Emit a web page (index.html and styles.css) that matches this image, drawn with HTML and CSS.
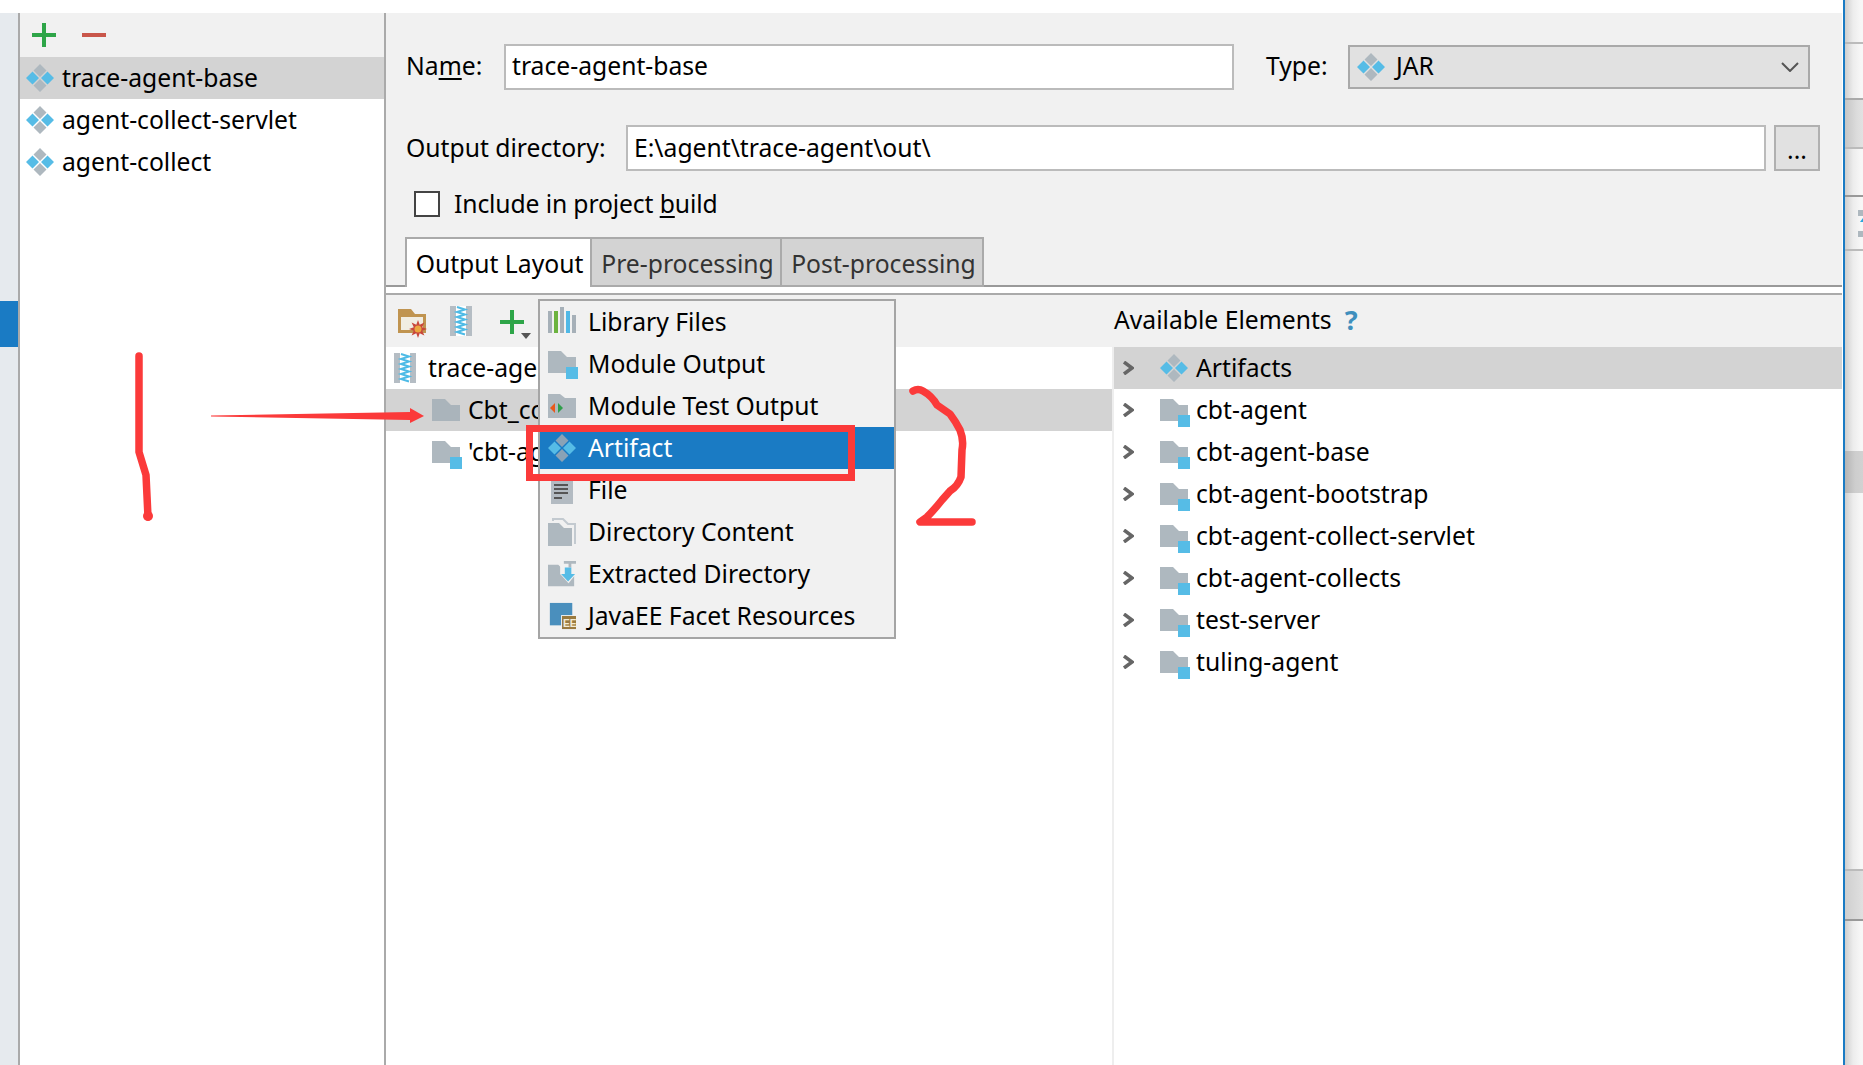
FILE: index.html
```html
<!DOCTYPE html>
<html lang="en">
<head>
<meta charset="utf-8">
<title>Project Structure - Artifacts</title>
<link rel="stylesheet" href="styles.css">
</head>
<body>
<svg class="defs" width="0" height="0" aria-hidden="true">
  <symbol id="i-artifact" viewBox="0 0 28 28">
    <path fill="#aeb8bf" d="M14 0l6.500 6.500L14 13 7.500 6.500zM14 15l6.500 6.500L14 28l-6.500-6.500z"/>
    <path fill="#56bce6" d="M6.500 7.500L13 14l-6.500 6.500L0 14zM21.500 7.500L28 14l-6.500 6.500L15 14z"/>
  </symbol>
  <symbol id="i-artifact-sel" viewBox="0 0 28 28">
    <path fill="#8aa2b6" d="M14 0l6.500 6.500L14 13 7.500 6.500zM14 15l6.500 6.500L14 28l-6.500-6.500z"/>
    <path fill="#56bce6" d="M6.500 7.500L13 14l-6.500 6.500L0 14zM21.500 7.500L28 14l-6.500 6.500L15 14z"/>
  </symbol>
  <symbol id="i-folder" viewBox="0 0 30 28">
    <path fill="#aab4bb" d="M0 0h13l6 6h9v16H0z"/>
  </symbol>
  <symbol id="i-module" viewBox="0 0 30 28">
    <path fill="#aeb8bf" d="M0 0h13l6 6h9v16H0z"/>
    <path fill="#56bce6" d="M18 16h12v12H18z"/>
  </symbol>
  <symbol id="i-zip" viewBox="0 0 22 30">
    <path fill="#b5bdc4" d="M0 0h22v30H0z"/>
    <path fill="#fff" d="M6 0h10v30H6z"/>
    <path fill="none" stroke="#4ebbe6" stroke-width="2" d="M7 1l8 2.500-8 2.500 8 2.500-8 2.500 8 2.500-8 2.500 8 2.500-8 2.500 8 2.500-8 2.500 8 2.500"/>
  </symbol>
</svg>

<div class="app">
  <div class="window">
    <div class="rail"><div class="rail-mark"></div></div>

    <aside class="list">
      <div class="list-bar">
        <svg class="ic24" viewBox="0 0 24 24"><path fill="#2ea548" d="M10 0h4v10h10v4H14v10h-4V14H0v-4h10z"/></svg>
        <svg class="ic24" viewBox="0 0 24 24"><path fill="#c9564a" d="M0 10h24v4H0z"/></svg>
      </div>
      <div class="row row-list is-sel"><svg class="ic28"><use href="#i-artifact"/></svg><span>trace-agent-base</span></div>
      <div class="row row-list"><svg class="ic28"><use href="#i-artifact"/></svg><span>agent-collect-servlet</span></div>
      <div class="row row-list"><svg class="ic28"><use href="#i-artifact"/></svg><span>agent-collect</span></div>
    </aside>

    <main class="main">
      <section class="form">
        <div class="form-row form-row-name">
          <label class="lbl lbl-name">Na<u>m</u>e:</label>
          <div class="input input-name">trace-agent-base</div>
          <label class="lbl lbl-type">Type:</label>
          <div class="select">
            <svg class="ic28"><use href="#i-artifact"/></svg>
            <span class="select-val">JAR</span>
            <svg class="select-arrow" viewBox="0 0 18 10"><path fill="none" stroke="#555" stroke-width="2" d="M1 1l8 8 8-8"/></svg>
          </div>
        </div>
        <div class="form-row form-row-out">
          <label class="lbl lbl-out">Output directory:</label>
          <div class="input input-out">E:\agent\trace-agent\out\</div>
          <div class="btn-dots">...</div>
        </div>
        <div class="form-row form-row-check">
          <span class="check"></span>
          <span class="check-label">Include in project <u>b</u>uild</span>
        </div>
      </section>

      <nav class="tabs">
        <div class="tab tab-on tab-a">Output Layout</div>
        <div class="tab tab-b">Pre-processing</div>
        <div class="tab tab-c">Post-processing</div>
      </nav>
      <div class="tabs-gap"></div>

      <section class="split">
        <div class="col col-left">
          <div class="head">
            <svg class="ic-star" viewBox="0 0 30 30">
              <path fill="#c09450" d="M0 0h13l4 5h11v19H0z"/>
              <path fill="#f1ede2" d="M3 8h22v13H3z"/>
              <path fill="#c9473a" d="M29 20L24.200 21.700 26.400 26.400 21.700 24.200 20 29 18.300 24.200 13.600 26.400 15.800 21.700 11 20 15.800 18.300 13.600 13.600 18.300 15.800 20 11 21.700 15.800 26.400 13.600 24.200 18.300z"/>
              <circle cx="20" cy="20" r="3.500" fill="#eba63f"/>
            </svg>
            <svg class="ic-zip"><use href="#i-zip"/></svg>
            <div class="add">
              <svg class="ic24" viewBox="0 0 24 24"><path fill="#2ea548" d="M10 0h4v10h10v4H14v10h-4V14H0v-4h10z"/></svg>
              <span class="add-caret"></span>
            </div>
          </div>
          <div class="tree tree-left">
            <div class="row row-root"><svg class="ic-zip"><use href="#i-zip"/></svg><span class="cut cut-root">trace-age</span></div>
            <div class="row row-child is-sel"><svg class="ic-folder"><use href="#i-folder"/></svg><span class="cut cut-child">Cbt_co</span></div>
            <div class="row row-child"><svg class="ic-folder"><use href="#i-module"/></svg><span class="cut cut-child">'cbt-ag</span></div>
          </div>
        </div>
        <div class="col col-right">
          <div class="head head-right"><span>Available Elements</span><span class="help">?</span></div>
          <div class="tree">
            <div class="row row-el is-sel"><svg class="chev" viewBox="0 0 12 14"><path d="M2 1l8 6-8 6"/></svg><svg class="ic28 ic-el"><use href="#i-artifact"/></svg><span>Artifacts</span></div>
            <div class="row row-el"><svg class="chev" viewBox="0 0 12 14"><path d="M2 1l8 6-8 6"/></svg><svg class="ic-folder ic-el"><use href="#i-module"/></svg><span>cbt-agent</span></div>
            <div class="row row-el"><svg class="chev" viewBox="0 0 12 14"><path d="M2 1l8 6-8 6"/></svg><svg class="ic-folder ic-el"><use href="#i-module"/></svg><span>cbt-agent-base</span></div>
            <div class="row row-el"><svg class="chev" viewBox="0 0 12 14"><path d="M2 1l8 6-8 6"/></svg><svg class="ic-folder ic-el"><use href="#i-module"/></svg><span>cbt-agent-bootstrap</span></div>
            <div class="row row-el"><svg class="chev" viewBox="0 0 12 14"><path d="M2 1l8 6-8 6"/></svg><svg class="ic-folder ic-el"><use href="#i-module"/></svg><span>cbt-agent-collect-servlet</span></div>
            <div class="row row-el"><svg class="chev" viewBox="0 0 12 14"><path d="M2 1l8 6-8 6"/></svg><svg class="ic-folder ic-el"><use href="#i-module"/></svg><span>cbt-agent-collects</span></div>
            <div class="row row-el"><svg class="chev" viewBox="0 0 12 14"><path d="M2 1l8 6-8 6"/></svg><svg class="ic-folder ic-el"><use href="#i-module"/></svg><span>test-server</span></div>
            <div class="row row-el"><svg class="chev" viewBox="0 0 12 14"><path d="M2 1l8 6-8 6"/></svg><svg class="ic-folder ic-el"><use href="#i-module"/></svg><span>tuling-agent</span></div>
          </div>
        </div>
      </section>
    </main>
  </div>

  <div class="strip">
    <div class="seg seg-a"></div>
    <div class="seg seg-b"></div>
    <div class="seg seg-c"></div>
    <div class="seg seg-d"></div>
    <div class="seg seg-e">
      <svg class="strip-ic" viewBox="0 0 5 28"><path fill="#aeb8bf" d="M0 0h5v6H0zM0 21h5v6H0z"/><path fill="#2aa4dc" d="M2 12l3-4v4z"/></svg>
    </div>
    <div class="seg seg-f"></div>
    <div class="seg seg-g"></div>
    <div class="seg seg-h"></div>
    <div class="seg seg-i"></div>
    <div class="seg seg-j"></div>
  </div>
</div>

<div class="menu">
  <div class="row menu-row"><svg class="mi mi-lib" viewBox="0 0 28 26"><path fill="#a6b0b8" d="M0 4h4v22H0zM12 0h4v26h-4zM24 8h4v18h-4z"/><path fill="#6cb33f" d="M6 4h4v22H6z"/><path fill="#4fb8e6" d="M18 4h4v22h-4z"/></svg><span>Library Files</span></div>
  <div class="row menu-row"><svg class="mi mi-mod" viewBox="0 0 30 28"><use href="#i-module"/></svg><span>Module Output</span></div>
  <div class="row menu-row"><svg class="mi" viewBox="0 0 28 24"><path fill="#aeb8bf" d="M0 0h12l5 4h11v20H0z"/><path fill="#e8591c" d="M2 14l5-5v10z"/><path fill="#2e9e4a" d="M15 14l-5-5v10z"/></svg><span>Module Test Output</span></div>
  <div class="row menu-row menu-on"><svg class="mi" viewBox="0 0 28 28"><use href="#i-artifact-sel"/></svg><span>Artifact</span></div>
  <div class="row menu-row"><svg class="mi mi-file" viewBox="0 0 28 32"><path fill="#b3bbc2" d="M3 0h22v30H3z"/><path fill="#555" d="M6 10h14v2H6zM6 14h14v2H6zM6 18h14v2H6zM6 23h8v2H6z"/></svg><span>File</span></div>
  <div class="row menu-row"><svg class="mi" viewBox="0 0 28 28"><path fill="none" stroke="#c3cad0" stroke-width="2" d="M5 3V1h10l5 5h7v20"/><path fill="#aeb8bf" d="M0 5h11l5 5h8v18H0z"/></svg><span>Directory Content</span></div>
  <div class="row menu-row"><svg class="mi" viewBox="0 0 30 28"><path fill="#aeb8bf" d="M0 4h11l5 5h12v18H0z"/><path fill="#f1f1f1" d="M13 0h17v14l-8 10-9-10z"/><path fill="#aeb8bf" d="M17 0h13v3h-5v4h-3V3h-5z"/><path fill="#56bce6" d="M18 7h7v7h4l-7.500 8-7.500-8h4z"/></svg><span>Extracted Directory</span></div>
  <div class="row menu-row"><svg class="mi" viewBox="0 0 30 28"><path fill="#4a8fbd" d="M2 0h24v24H2z"/><path fill="#f1f1f1" d="M14 13h16v15H14z"/><path fill="#9a7a3f" d="M15 14h15v14H15z"/><text x="16" y="26" class="ee">EE</text></svg><span>JavaEE Facet Resources</span></div>
</div>

<svg class="marks" viewBox="0 0 1863 1065" aria-hidden="true">
  <path class="pen" d="M139 356V452L146 475L148 517"/>
  <circle class="fill" cx="148" cy="516" r="5"/>
  <path class="pen" d="M913 391Q918 388 923 391Q932 396 937 405L950 414Q956 422 960 430Q964 440 962 450L961 477Q958 486 950 491L942 500Q934 510 927 517L920 522H972"/>
  <path class="fill" d="M211 415.500L410 412V408L424 416L410 423V420L211 416.500Z"/>
  <rect class="box" x="529.500" y="428.500" width="322" height="49"/>
</svg>
</body>
</html>
```

FILE: styles.css
```css
* { box-sizing: border-box; }

html, body {
  margin: 0;
  height: 100%;
  overflow: hidden;
  background: #fff;
}

body {
  font-family: "Noto Sans", "Open Sans", sans-serif;
  font-size: 24.7px;
  line-height: 32px;
  color: #000;
}

.defs { position: absolute; }

u { text-underline-offset: 3px; text-decoration-thickness: 2px; }

.app {
  display: flex;
  width: 1863px;
  height: 1065px;
}

.window {
  display: flex;
  width: 1842px;
  height: 1065px;
  margin-right: 1px;
  padding-top: 13px;
}

/* left rail */
.rail {
  width: 18px;
  background: #e6eaee;
  padding-top: 288px;
}
.rail-mark { height: 46px; background: #1a7bc4; }

/* artifact list */
.list {
  width: 368px;
  border-left: 2px solid #aaa;
  border-right: 2px solid #aaa;
  background: #fff;
}
.list-bar {
  display: flex;
  align-items: center;
  gap: 26px;
  height: 44px;
  padding-left: 12px;
  background: #f1f1f1;
}

.ic24 { width: 24px; height: 24px; flex: none; }
.ic28 { width: 28px; height: 28px; flex: none; }
.ic-zip { width: 22px; height: 30px; flex: none; }
.ic-folder { width: 30px; height: 28px; flex: none; margin-top: 6px; }
.ic-star { width: 30px; height: 30px; flex: none; margin-top: 6px; }

.row {
  display: flex;
  align-items: center;
  height: 42px;
  white-space: nowrap;
  overflow: hidden;
}
.is-sel { background: #d3d3d3; }

.row-list { padding-left: 6px; gap: 8px; }

/* main */
.main {
  width: 1456px;
  display: flex;
  flex-direction: column;
}

.form {
  background: #f1f1f1;
  height: 224px;
  padding: 32px 0 0 20px;
}
.form-row { display: flex; align-items: center; }
.form-row-name { height: 44px; }
.form-row-out { height: 46px; margin-top: 36px; }
.form-row-check { height: 26px; margin-top: 20px; padding-left: 8px; }

.lbl-name { width: 98px; padding-bottom: 2px; }
.lbl-type { width: 82px; margin-left: 32px; padding-bottom: 2px; }
.lbl-out { width: 220px; }

.input {
  height: 100%;
  background: #fff;
  border: 2px solid #bbb;
  padding-left: 6px;
  display: flex;
  align-items: center;
}
.input-name { width: 730px; height: 46px; flex: none; padding-bottom: 2px; }
.input-out { width: 1140px; }

.select {
  width: 462px;
  height: 100%;
  display: flex;
  align-items: center;
  gap: 11px;
  padding-left: 7px;
  background: #e1e1e1;
  border: 2px solid #a9a9a9;
}
.select-val { flex: 1; padding-bottom: 2px; }
.select-arrow { width: 18px; height: 10px; margin-right: 9px; }

.btn-dots {
  width: 46px;
  height: 100%;
  margin-left: 8px;
  text-align: center;
  line-height: 46px;
  background: #e1e1e1;
  border: 2px solid #b0b0b0;
}

.check {
  width: 26px;
  height: 26px;
  background: #fff;
  border: 2px solid #444;
}
.check-label { margin-left: 14px; letter-spacing: -0.12px; }

/* tabs */
.tabs {
  display: flex;
  height: 50px;
  padding-left: 19px;
  background: #f1f1f1;
  border-bottom: 2px solid #999;
}
.tab {
  height: 50px;
  border: 2px solid #aaa;
  border-left-width: 0;
  background: #d3d3d3;
  color: #333;
  text-align: center;
  line-height: 50px;
  padding-left: 3px;
  white-space: nowrap;
}
.tab-on {
  background: #fff;
  color: #000;
  border-left-width: 2px;
  border-bottom: 0;
  padding-left: 2px;
  position: relative;
}
.tab-a { width: 187px; }
.tab-b { width: 190px; }
.tab-c { width: 202px; }

.tabs-gap { height: 6px; background: #fff; }

/* split */
.split {
  flex: 1;
  display: flex;
  border-top: 2px solid #aaa;
}
.col { display: flex; flex-direction: column; }
.col-left { width: 728px; }
.col-right { flex: 1; }

.head {
  height: 52px;
  flex: none;
  display: flex;
  align-items: center;
  background: #f1f1f1;
}
.col-left .head { padding-left: 12px; }
.col-left .head .ic-zip { margin-left: 22px; }
.add { position: relative; margin-left: 28px; width: 24px; height: 24px; }
.add-caret {
  position: absolute;
  left: 21px;
  top: 24px;
  border-left: 5px solid transparent;
  border-right: 5px solid transparent;
  border-top: 6px solid #555;
}
.head-right { gap: 13px; padding-bottom: 2px; }
.help { color: #3f8fbd; font-weight: 700; font-size: 27px; }

.tree { flex: 1; background: #fff; }
.tree-left { border-right: 2px solid #eee; }

.cut { overflow: hidden; }
.cut-root { width: 110px; }
.cut-child { width: 70px; }

.row-root { padding-left: 8px; gap: 12px; }
.row-child { padding-left: 46px; gap: 6px; }

.row-el { padding-left: 8px; }
.chev { width: 12px; height: 14px; flex: none; fill: none; stroke: #666; stroke-width: 3.5; }
.ic-el { margin-left: 26px; margin-right: 6px; }
svg.ic28.ic-el { margin-right: 8px; }

/* popup menu */
.menu {
  position: absolute;
  left: 538px;
  top: 299px;
  width: 358px;
  height: 340px;
  background: #f1f1f1;
  border: 2px solid #a5a5a5;
}
.menu-row { padding-left: 8px; gap: 12px; }
.menu-on { background: #1a7bc4; color: #fff; }
.mi { width: 28px; height: 28px; flex: none; overflow: hidden; }
.mi-lib { height: 26px; margin-top: -4px; }
.mi-mod { width: 30px; margin-right: -2px; margin-top: 2px; }
.mi-file { height: 32px; }
.ee { font: 700 11px "Liberation Sans", sans-serif; fill: #f3ead6; }

/* side strip */
.strip {
  width: 20px;
  height: 1065px;
  border-left: 2px solid #1a7bc4;
  display: flex;
  flex-direction: column;
  background: linear-gradient(90deg, #cfcfcf 0, #ececec 8px, #f7f7f7 16px);
}
.seg { flex: none; border-bottom: 2px solid #bbb; }
.seg-a { height: 44px; }
.seg-b { height: 56px; border-bottom-color: #aaa; }
.seg-c { height: 49px; background: linear-gradient(90deg, #c6c6c6 0, #dcdcdc 12px, #e2e2e2 18px); }
.seg-d { height: 48px; border-bottom-color: #999; }
.seg-e { height: 54px; padding: 13px 0 0 13px; }
.seg-f { height: 200px; border-bottom: 0; }
.seg-g { height: 42px; border-bottom: 0; background: linear-gradient(90deg, #b5b5b5 0, #cdcdcd 10px, #d2d2d2 18px); }
.seg-h { height: 378px; }
.seg-i { height: 50px; border-bottom-color: #999; background: linear-gradient(90deg, #cfcfcf 0, #e0e0e0 18px); }
.seg-j { flex: 1; border-bottom: 0; }
.strip-ic { display: block; width: 5px; height: 28px; }

/* hand-drawn annotations */
.marks {
  position: absolute;
  left: 0;
  top: 0;
  width: 1863px;
  height: 1065px;
  pointer-events: none;
}
.pen { fill: none; stroke: #fb3a3a; stroke-width: 7.500; stroke-linecap: round; stroke-linejoin: round; }
.fill { fill: #fb3a3a; }
.box { fill: none; stroke: #fb3a3a; stroke-width: 7; }
```
